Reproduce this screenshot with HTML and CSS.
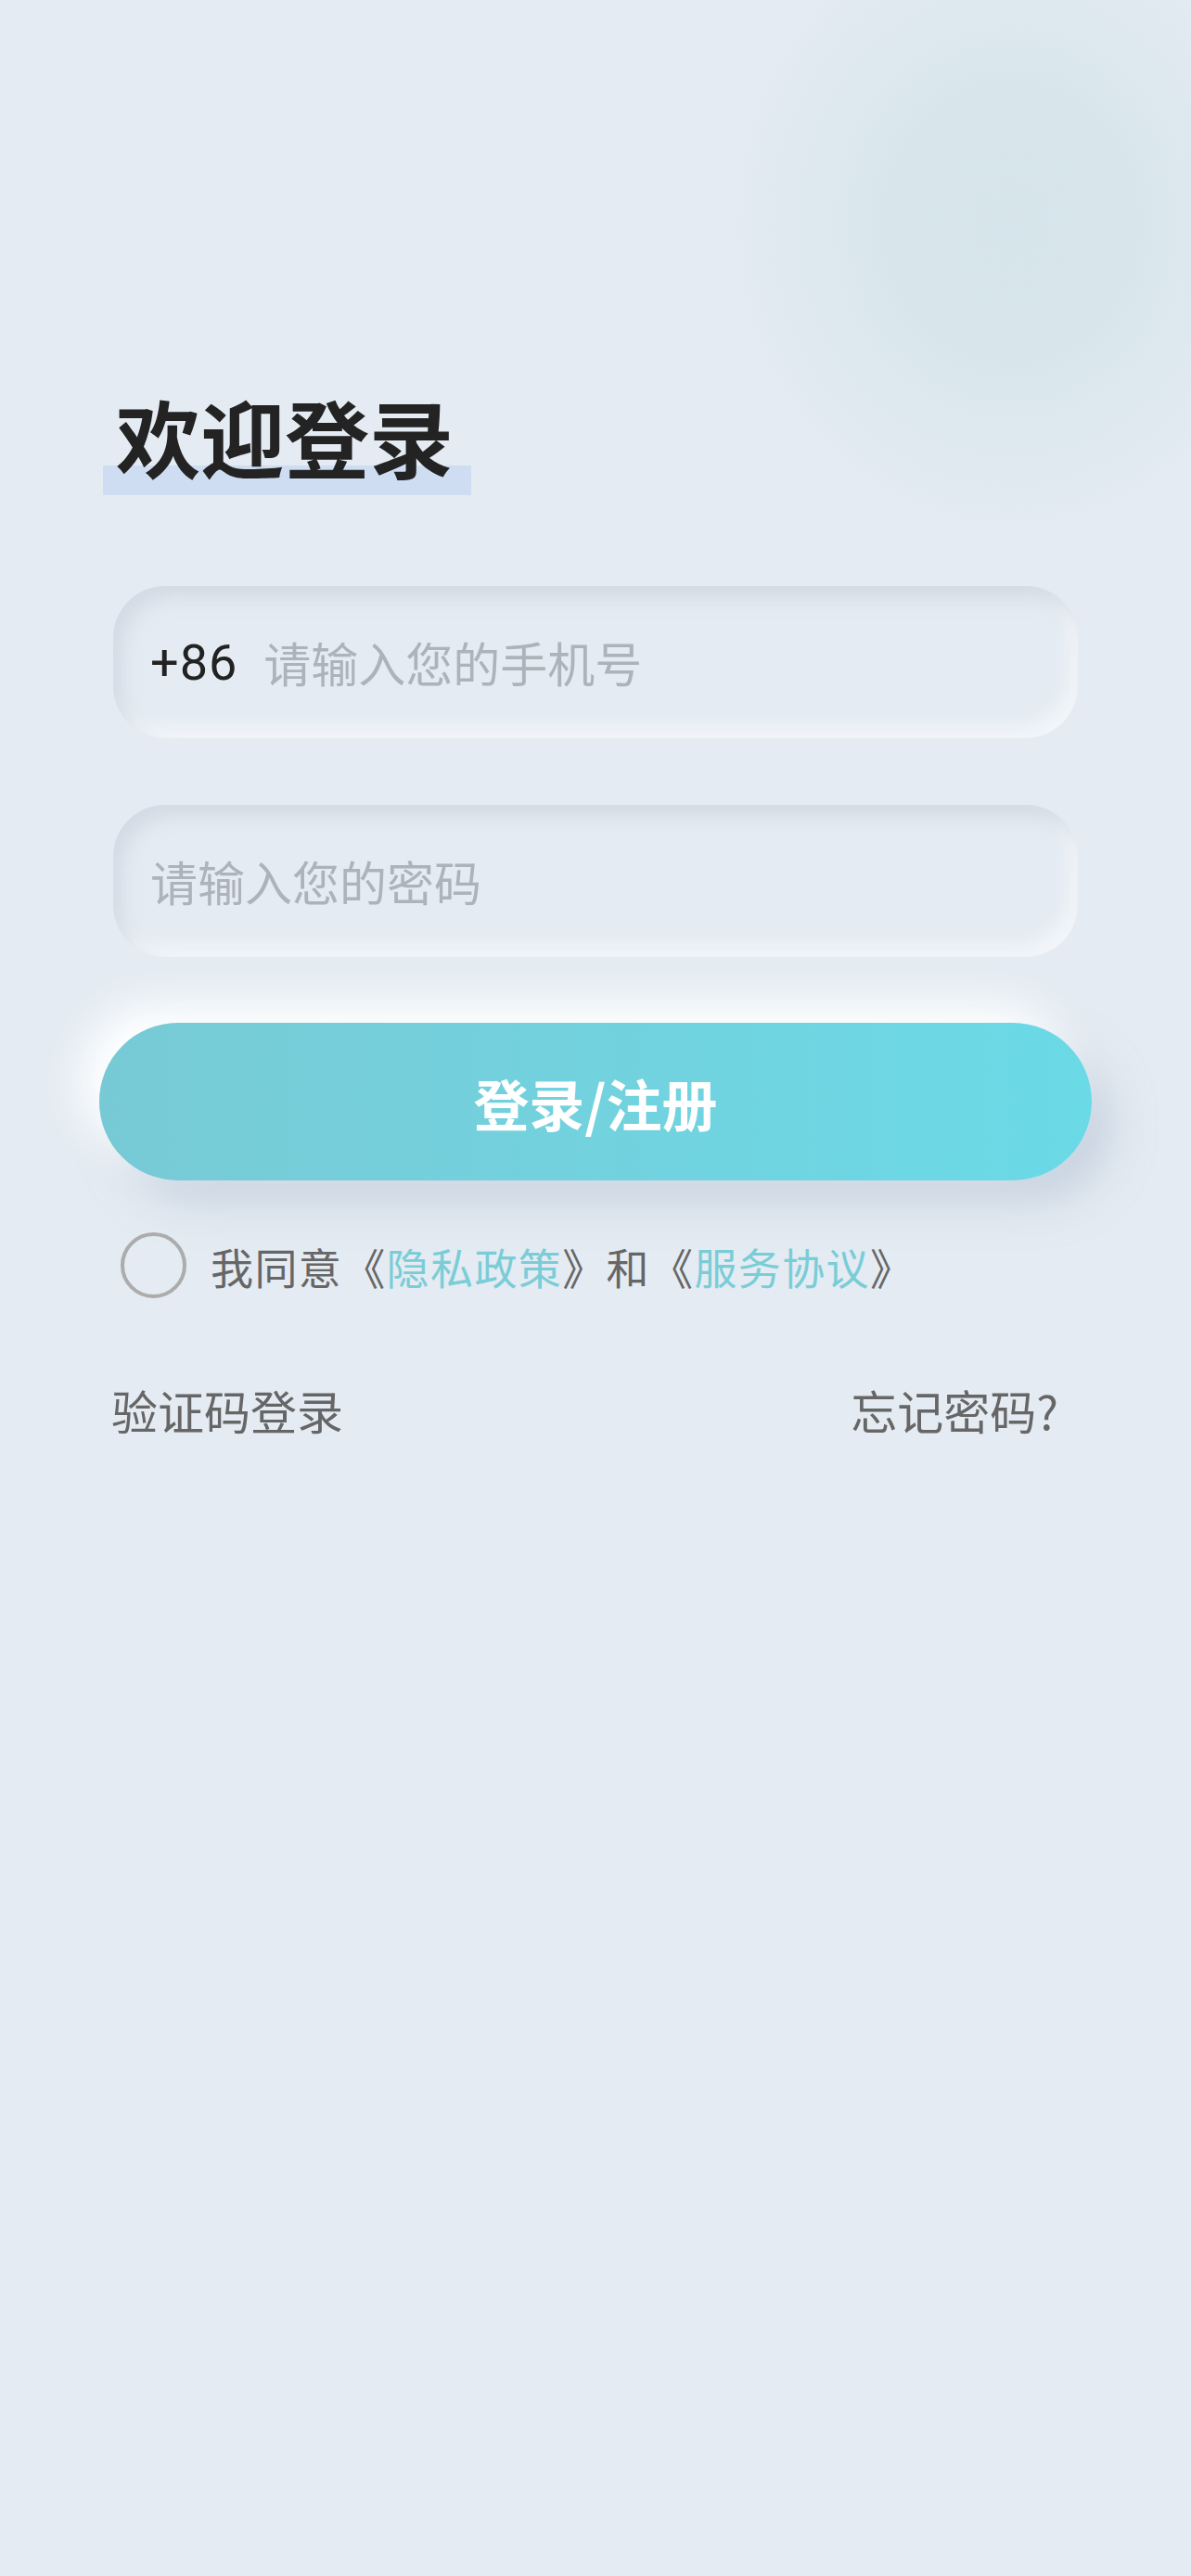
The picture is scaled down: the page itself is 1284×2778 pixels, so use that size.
FILE: index.html
```html
<!DOCTYPE html>
<html lang="zh-CN">
<head>
<meta charset="utf-8">
<title>欢迎登录</title>
<link rel="stylesheet" href="styles.css">
</head>
<body>
<main class="page">
  <h1 class="title">欢迎登录</h1>
  <div class="field">
    <span class="prefix">+86</span>
    <span class="placeholder">请输入您的手机号</span>
  </div>
  <div class="field field-second">
    <span class="placeholder">请输入您的密码</span>
  </div>
  <button class="login-btn" type="button">登录/注册</button>
  <div class="agree">
    <span class="check"></span>
    <span class="agree-text">我同意《<span class="link">隐私政策</span>》和《<span class="link">服务协议</span>》</span>
  </div>
  <div class="bottom-links">
    <span class="text-link">验证码登录</span>
    <span class="text-link">忘记密码?</span>
  </div>
</main>
</body>
</html>
```
FILE: styles.css
```css
html {
  margin: 0;
  padding: 0;
  background: #e4ebf2;
}
body {
  margin: 0;
  padding: 0;
  width: 1284px;
  min-height: 2778px;
  font-family: "Noto Sans CJK SC", "Noto Sans", sans-serif;
  background:
    radial-gradient(ellipse 300px 330px at 1090px 240px,
      rgba(214, 229, 235, 0.95) 0%,
      rgba(214, 229, 235, 0.85) 45%,
      rgba(228, 235, 242, 0) 100%),
    #e4ebf2;
}
.page {
  padding: 424px 107px 0 107px;
  display: flex;
  flex-direction: column;
}
.title {
  position: relative;
  z-index: 0;
  align-self: flex-start;
  margin: 0 0 118px 18px;
  font-size: 91px;
  line-height: 90px;
  font-weight: 700;
  color: #232323;
}
.title::before {
  content: "";
  position: absolute;
  z-index: -1;
  left: -14px;
  top: 78px;
  width: 397px;
  height: 32px;
  background: #cfddf3;
}
.field {
  margin: 0 15px;
  height: 164px;
  border-radius: 56px;
  background: #e4ebf2;
  box-shadow: inset 10px 12px 18px rgba(196, 205, 218, 0.55),
              inset -10px -12px 18px rgba(255, 255, 255, 0.55);
  display: flex;
  align-items: center;
  padding: 0 40px;
  gap: 28px;
}
.field-second {
  margin-top: 72px;
}
.prefix {
  font-family: Roboto, "Liberation Sans", sans-serif;
  font-size: 54px;
  letter-spacing: 1px;
  color: #222;
}
.placeholder {
  font-size: 51px;
  color: #adb3ba;
}
.login-btn {
  margin-top: 71px;
  height: 170px;
  border: none;
  border-radius: 85px;
  background: linear-gradient(90deg, #77cad5 0%, #72d2de 50%, #6adae6 100%);
  box-shadow: -22px -22px 44px rgba(255, 255, 255, 0.95),
              22px 24px 44px rgba(186, 198, 215, 0.65);
  color: #ffffff;
  font-family: "Noto Sans CJK SC", sans-serif;
  font-size: 60px;
  font-weight: 700;
  padding: 0;
}
.agree {
  margin: 56px 0 0 23px;
  display: flex;
  align-items: center;
  gap: 26px;
}
.check {
  width: 63px;
  height: 63px;
  border: 4px solid #acacac;
  border-radius: 50%;
  flex: none;
}
.agree-text {
  font-size: 46px;
  letter-spacing: 1.4px;
  color: #666666;
}
.link {
  color: #7acdd7;
}
.bottom-links {
  margin: 90px 36px 0 13px;
  display: flex;
  justify-content: space-between;
}
.text-link {
  font-size: 50px;
  line-height: 60px;
  color: #666666;
}
```
